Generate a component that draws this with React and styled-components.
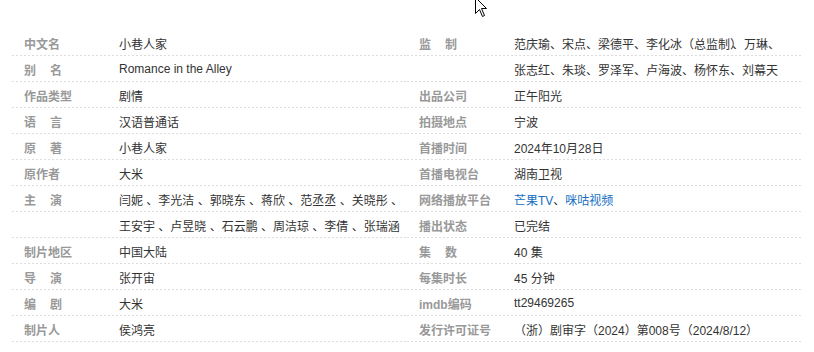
import React from 'react';
import styled, { createGlobalStyle } from 'styled-components';

const GlobalStyle = createGlobalStyle`
    body {
        margin: 0;
        background: #fff;
        font-family: "Liberation Sans", Arial, "Noto Sans CJK SC", sans-serif;
        font-size: 12px;
    }
`;

const Page = styled.div`
    position: relative;
    padding: 30px 0 0 12px;
    width: 790px;
`;

const InfoGrid = styled.div`
    display: grid;
    grid-template-columns: 395px 395px;
`;

const Column = styled.dl`
    margin: 0;
`;

const Row = styled.div`
    display: flex;
    align-items: center;
    height: 26px;
    padding-left: 12px;
    background: linear-gradient(to right, #dcdcdc 50%, transparent 50%) left bottom / 4px 1px repeat-x;
`;

const Label = styled.dt`
    flex: 0 0 95px;
    color: #999;
    font-weight: bold;
    white-space: nowrap;
`;

// two-char labels: chars pushed apart like "别    名"
const Spread = styled.span`
    display: flex;
    justify-content: space-between;
    width: 38px;
`;

const Value = styled.dd`
    margin: 0;
    color: #333;
    white-space: nowrap;
`;

const Link = styled.a`
    color: #136ec2;
    text-decoration: none;
`;

// "）、" 连在一起时收掉一点空白（像 text-spacing-trim）
const Trim = styled.span`
    letter-spacing: -4px;
`;

const Cursor = styled.svg`
    position: absolute;
    left: 475px;
    top: -3px;
`;

const left = [
    ['中文名', '小巷人家'],
    ['别名', 'Romance in the Alley'],
    ['作品类型', '剧情'],
    ['语言', '汉语普通话'],
    ['原著', '小巷人家'],
    ['原作者', '大米'],
    ['主演', '闫妮 、李光洁 、郭晓东 、蒋欣 、范丞丞 、关晓彤 、'],
    ['', '王安宇 、卢昱晓 、石云鹏 、周洁琼 、李倩 、张瑞涵'],
    ['制片地区', '中国大陆'],
    ['导演', '张开宙'],
    ['编剧', '大米'],
    ['制片人', '侯鸿亮'],
];

const right = [
    ['监制', <>范庆瑜、宋点、梁德平、李化冰（总监制<Trim>）</Trim>、万琳、</>],
    ['', '张志红、朱琰、罗泽军、卢海波、杨怀东、刘幕天'],
    ['出品公司', '正午阳光'],
    ['拍摄地点', '宁波'],
    ['首播时间', '2024年10月28日'],
    ['首播电视台', '湖南卫视'],
    ['网络播放平台', <><Link href="#">芒果TV</Link>、<Link href="#">咪咕视频</Link></>],
    ['播出状态', '已完结'],
    ['集数', '40 集'],
    ['每集时长', '45 分钟'],
    ['imdb编码', 'tt29469265'],
    ['发行许可证号', '（浙）剧审字（2024）第008号（2024/8/12）'],
];

const InfoLabel = ({ name }) => {
    if (name.length === 2) {
        return <Label><Spread><span>{name[0]}</span><span>{name[1]}</span></Spread></Label>;
    }
    return <Label>{name}</Label>;
};

const InfoColumn = ({ items }) => (
    <Column>
        {items.map(([name, value], i) => (
            <Row key={i}>
                <InfoLabel name={name} />
                <Value>{value}</Value>
            </Row>
        ))}
    </Column>
);

const App = () => {
    return (
        <Page>
            <GlobalStyle />
            <InfoGrid>
                <InfoColumn items={left} />
                <InfoColumn items={right} />
            </InfoGrid>
            <Cursor width="13" height="21" viewBox="0 0 13 21">
                <path d="M0.5 0.5 L0.5 16.5 L4.5 12.5 L7.5 19.5 L9.5 18.5 L6.5 11.5 L11.5 11.5 Z" fill="#fff" stroke="#000" strokeWidth="1" />
            </Cursor>
        </Page>
    );
};

export default App;
